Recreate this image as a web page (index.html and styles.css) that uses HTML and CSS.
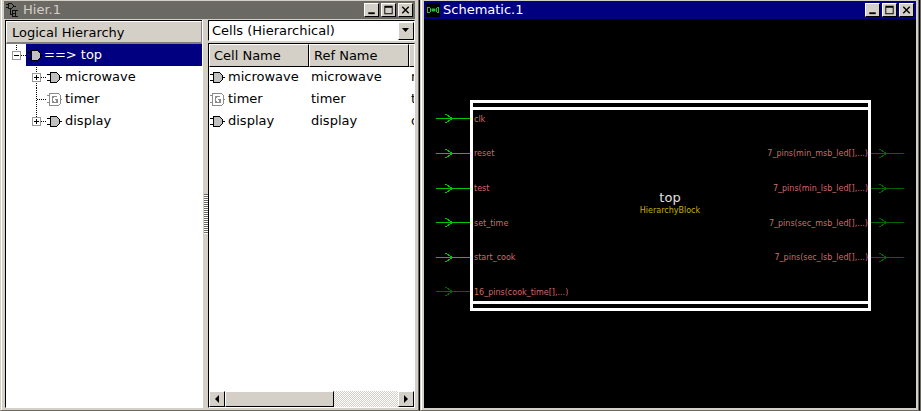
FILE: index.html
```html
<!DOCTYPE html>
<html lang="en">
<head>
<meta charset="utf-8">
<title>Design viewer</title>
<link rel="stylesheet" href="styles.css">
</head>
<body>
<svg class="defs" aria-hidden="true">
  <defs>
    <g id="gate" shape-rendering="crispEdges">
      <path d="M3 1h7v1h1v1h1v1h1v5h-1v1h-1v1h-1v1H3z" fill="#c0c0c0"/>
      <path d="M3 1h7v1H4v9h6v1H3zM0 3h3v1H0zM0 9h3v1H0zM10 2h1v1h-1zM11 3h1v1h-1zM12 4h1v5h-1zM11 9h1v1h-1zM10 10h1v1h-1zM13 6h2v1h-2z" fill="#000"/>
    </g>
    <g id="generic" fill="none" stroke="#8c8c8c" shape-rendering="crispEdges">
      <path d="M2.500 .500h9l2 2v8l-2 2h-9zM0 2.500h2M0 9.500h2M13 6.500h2"/>
      <path d="M10 3.500H6.500l-1 1v4l1 1h3.500v-3H8" stroke-width="1.500"/>
    </g>
    <g id="min"><path d="M3 9h7v2H3z"/></g>
    <g id="max"><path d="M2 2h9v9H2zM3 4v6h7V4z" fill-rule="evenodd"/></g>
    <g id="close"><path d="M3 3l7 7M10 3l-7 7" stroke="#000" stroke-width="1.500"/></g>
    <g id="arrow"><path d="M0 .500h34M9 -4l8 4.500l-8 4.500" fill="none"/></g>
  </defs>
</svg>
<main class="desktop">
  <section class="window hier">
    <header class="title">
      <svg class="title-icon" width="14" height="16" viewBox="0 0 14 16"><path d="M2.500 1.500h3l2 2v1l-2 2h-3zM0 2.500h2M0 5.500h2M8 4.500h2M4.500 7v5.500h2M6.500 8v6.500h5M7 8.500h5M7 11.500h3M9.500 9v5" fill="none" stroke="#111" shape-rendering="crispEdges"/></svg>
      <h1>Hier.1</h1>
      <button aria-label="Minimize"><svg viewBox="0 0 13 13"><use href="#min"/></svg></button>
      <button aria-label="Maximize"><svg viewBox="0 0 13 13"><use href="#max"/></svg></button>
      <button aria-label="Close"><svg viewBox="0 0 13 13"><use href="#close"/></svg></button>
    </header>
    <div class="panes">
      <div class="tree-pane">
        <h2 class="head">Logical Hierarchy</h2>
        <ul class="tree">
          <li>
            <svg width="20" height="22" shape-rendering="crispEdges"><path d="M10.500 1v6M15 11.500h5" class="dots"/><path d="M6.500 7.500h8v8h-8z" class="box"/><path d="M8 11.500h5" class="sign"/></svg>
            <span class="selected"><svg width="15" height="13"><use href="#gate"/></svg>==&gt; top</span>
          </li>
          <li>
            <svg width="40" height="22" shape-rendering="crispEdges"><path d="M30.500 1v21M35 11.500h5" class="dots"/><path d="M26.500 7.500h8v8h-8z" class="box"/><path d="M28 11.500h5M30.500 9v5" class="sign"/></svg>
            <span><svg width="15" height="13"><use href="#gate"/></svg>microwave</span>
          </li>
          <li>
            <svg width="40" height="22" shape-rendering="crispEdges"><path d="M30.500 0v22M31 11.500h9" class="dots"/></svg>
            <span><svg width="15" height="13"><use href="#generic"/></svg>timer</span>
          </li>
          <li>
            <svg width="40" height="22" shape-rendering="crispEdges"><path d="M30.500 0v7M35 11.500h5" class="dots"/><path d="M26.500 7.500h8v8h-8z" class="box"/><path d="M28 11.500h5M30.500 9v5" class="sign"/></svg>
            <span><svg width="15" height="13"><use href="#gate"/></svg>display</span>
          </li>
        </ul>
      </div>
      <div class="splitter"><div class="grip"></div></div>
      <div class="cells-pane">
        <div class="combo">
          <select aria-label="List contents"><option>Cells (Hierarchical)</option></select>
          <span class="drop"><svg width="13" height="15"><path d="M3 5h7l-3.500 4z"/></svg></span>
        </div>
        <div class="list">
          <table>
            <thead><tr><th>Cell Name</th><th>Ref Name</th><th></th></tr></thead>
            <tbody>
              <tr><td><svg width="15" height="13"><use href="#gate"/></svg>microwave</td><td>microwave</td><td>microwave</td></tr>
              <tr><td><svg width="15" height="13"><use href="#generic"/></svg>timer</td><td>timer</td><td>timer</td></tr>
              <tr><td><svg width="15" height="13"><use href="#gate"/></svg>display</td><td>display</td><td>display</td></tr>
            </tbody>
          </table>
          <div class="scroll">
            <button aria-label="Scroll left"><svg width="13" height="13"><path d="M9 2v8l-4-4z"/></svg></button>
            <div class="track"><div class="thumb"></div></div>
            <button aria-label="Scroll right"><svg width="13" height="13"><path d="M5 2v8l4-4z"/></svg></button>
          </div>
        </div>
      </div>
    </div>
  </section>
  <section class="window schematic">
    <header class="title active">
      <svg class="title-icon" width="14" height="14" viewBox="0 0 14 14"><path d="M0 0h14v14H0z" fill="#000"/><path d="M1.500 4.500h2l1 1v3l-1 1h-2zM12.500 4.500h-1l-1 1v3l1 1h1z" fill="none" stroke="#20c040" shape-rendering="crispEdges"/><path d="M5 6.500h5v1H5zM6 5.500h3v3H6z" fill="#20c040"/></svg>
      <h1>Schematic.1</h1>
      <button aria-label="Minimize"><svg viewBox="0 0 13 13"><use href="#min"/></svg></button>
      <button aria-label="Maximize"><svg viewBox="0 0 13 13"><use href="#max"/></svg></button>
      <button aria-label="Close"><svg viewBox="0 0 13 13"><use href="#close"/></svg></button>
    </header>
    <div class="canvas">
      <svg class="diagram" width="468" height="212" viewBox="0 0 468 212">
        <g class="wire" shape-rendering="crispEdges">
          <use href="#arrow" x="0" y="18"/><use href="#arrow" x="0" y="53"/><use href="#arrow" x="0" y="88"/><use href="#arrow" x="0" y="122"/><use href="#arrow" x="0" y="157"/>
        </g>
        <g class="bus" shape-rendering="crispEdges">
          <use href="#arrow" x="0" y="191"/>
          <use href="#arrow" x="434" y="53"/><use href="#arrow" x="434" y="88"/><use href="#arrow" x="434" y="122"/><use href="#arrow" x="434" y="157"/>
        </g>
        <path class="block" d="M35.500 1.500h398v208h-398zM37 8.500h395M37 202.500h395" shape-rendering="crispEdges"/>
        <g class="pin">
          <text x="38" y="22">clk</text>
          <text x="38" y="56">reset</text>
          <text x="38" y="91">test</text>
          <text x="38" y="126">set_time</text>
          <text x="38" y="160">start_cook</text>
          <text x="38" y="195">16_pins(cook_time[],...)</text>
        </g>
        <g class="pin out">
          <text x="432" y="56">7_pins(min_msb_led[],...)</text>
          <text x="432" y="91">7_pins(min_lsb_led[],...)</text>
          <text x="432" y="126">7_pins(sec_msb_led[],...)</text>
          <text x="432" y="160">7_pins(sec_lsb_led[],...)</text>
        </g>
        <text class="name" x="234" y="102">top</text>
        <text class="kind" x="234" y="113">HierarchyBlock</text>
      </svg>
    </div>
  </section>
</main>
</body>
</html>
```
FILE: styles.css
```css
* { box-sizing: border-box; }
body { margin: 0; background: #6b6963; color: #000; font: 13px/18px "DejaVu Sans", sans-serif; }
h1, h2 { margin: 0; font-size: 13px; font-weight: normal; }
button, select { font: inherit; color: inherit; }
svg { display: block; flex: none; }
.defs { position: absolute; width: 0; height: 0; }
.desktop { display: grid; grid-template-columns: 420fr 500fr; height: 100vh; padding-right: 1px; }

.window {
  display: flex; flex-direction: column; min-width: 0;
  padding: 1px 3px 2px 3px; background: #d4d0c8;
  border: 1px solid #d4d0c8; border-top: 0; border-right-color: #000; border-bottom-color: #6b6963;
  box-shadow: inset 1px 0 #fff, inset -1px 0 #6b6963;
}
.hier { padding-right: 4px; }
.title { display: flex; align-items: center; height: 18px; padding: 0 2px; background: #6b6963; color: #d4d0c8; flex: none; }
.title.active { background: #000080; color: #fff; }
.title h1 { flex: 1; margin-left: 3px; line-height: 16px; }
.title button {
  width: 15px; height: 14px; margin-left: 2px; padding: 0; background: #d4d0c8;
  border: 1px solid #fff; border-right-color: #000; border-bottom-color: #000;
}
.title button svg { width: 13px; height: 12px; }

.panes { display: flex; flex: 1; min-height: 0; padding-top: 1px; }
.tree-pane {
  flex: 196 1 0; min-width: 0; margin-left: 1px; background: #fff;
  border-top: 1px solid #000; border-left: 1px solid #000; border-bottom: 1px solid #fff;
}
.head { height: 23px; padding: 0 5px; line-height: 21px; background: #d4d0c8; border: 1px solid #fff; border-right-color: #808080; border-bottom: 2px solid #808080; }
.tree { margin: 0; padding: 0; list-style: none; }
.tree li { display: flex; height: 22px; }
.tree span { display: flex; align-items: center; flex: 1; gap: 3px; padding-left: 1px; line-height: 20px; }
.tree span.selected { padding-left: 2px; gap: 1px; background: #000080; color: #fff; }
.dots { stroke: #000; stroke-dasharray: 1 1; fill: none; }
.box { stroke: #999; fill: #fff; }
.sign { stroke: #000; }

.splitter { display: flex; flex-direction: column; justify-content: center; width: 6px; background: #d4d0c8; border-left: 1px solid #fff; }
.grip { height: 40px; margin-left: 1px; background: repeating-linear-gradient(#6b6963 0 1px, #fff 1px 2px); }
.cells-pane { display: flex; flex-direction: column; flex: 207 1 0; min-width: 0; }
.combo { position: relative; height: 21px; border: 1px solid #000; border-right-color: #fff; border-bottom-color: #fff; }
.combo select { display: block; width: 100%; height: 19px; padding: 0 3px; appearance: none; background: #fff; border: 0; border-radius: 0; }
.drop { position: absolute; top: 1px; right: 0; width: 16px; height: 18px; background: #d4d0c8; border: 1px solid #fff; border-right-color: #000; border-bottom-color: #000; }
.list { display: flex; flex-direction: column; flex: 1; min-height: 0; overflow: hidden; margin-top: 2px; background: #fff; border: 1px solid #000; border-right-color: #fff; border-bottom-color: #fff; }
table { width: 300px; table-layout: fixed; border-collapse: separate; border-spacing: 0; }
th { height: 23px; padding: 0 4px; line-height: 21px; font-weight: normal; text-align: left; background: #d4d0c8; border: 1px solid #fff; border-right: 1px solid #000; border-bottom: 1px solid #000; }
td { height: 22px; padding: 0 2px 2px; line-height: 20px; white-space: nowrap; }
td:first-child { padding-left: 1px; }
td svg { display: inline-block; vertical-align: middle; margin: 0 3px 0 0; }
.scroll { display: flex; height: 16px; margin-top: auto; }
.scroll button, .thumb { padding: 0; background: #d4d0c8; border: 1px solid #fff; border-right-color: #000; border-bottom-color: #000; }
.scroll button { width: 16px; }
.track { flex: 1; background: repeating-conic-gradient(#d4d0c8 0 25%, #fff 0 50%) 0 0 / 2px 2px; }
.thumb { width: 63%; height: 16px; }

.canvas { flex: 1; min-height: 0; padding-top: 81px; background: #000; }
.diagram { margin: 0 auto; font-size: 8px; }
.wire { stroke: #00c800; }
.bus { stroke: #006400; }
.block { fill: none; stroke: #fff; stroke-width: 3px; }
.pin { fill: #d06a6a; }
.out { text-anchor: end; }
.name { fill: #e0e0e0; font-size: 13px; text-anchor: middle; }
.kind { fill: #c8b000; text-anchor: middle; }
```
